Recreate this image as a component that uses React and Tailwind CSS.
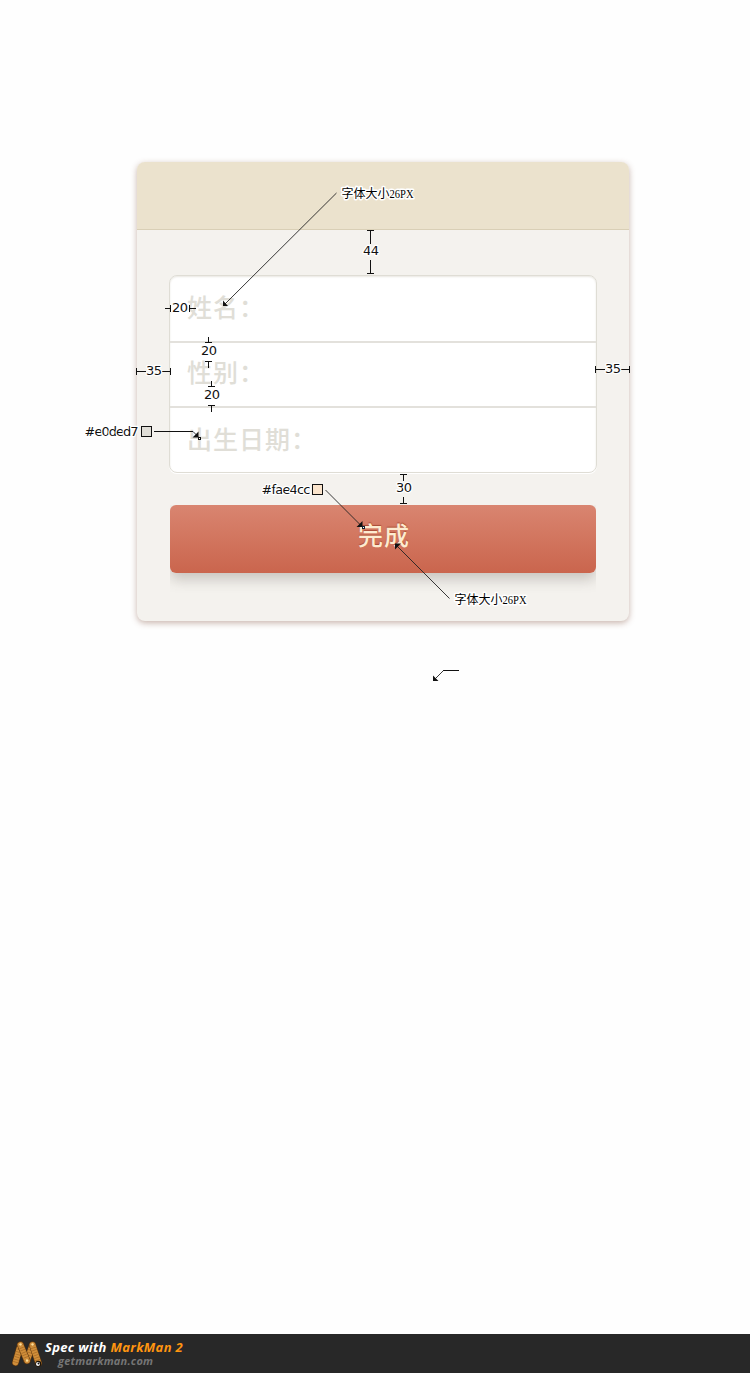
const fields = [
  { name: "姓名：", row: "h-[67px] border-b-2 pb-[5px]" },
  { name: "性别：", row: "h-[65px] border-b-2 pb-[6px]" },
  { name: "出生日期：", row: "h-16 pb-1" },
];

const ink = "#111";

function Label({ x, y, width, children }) {
  return (
    <text
      x={x}
      y={y}
      textLength={width}
      lengthAdjust="spacing"
      fontFamily="'DejaVu Sans', sans-serif"
      fontSize="13"
      fill={ink}
      stroke="#fff"
      strokeWidth="2.5"
      strokeLinejoin="round"
      paintOrder="stroke"
    >
      {children}
    </text>
  );
}

function FontNote({ x, y }) {
  return (
    <text
      x={x}
      y={y}
      fontSize="12"
      fill="#000"
      stroke="#fff"
      strokeWidth="3"
      strokeLinejoin="round"
      paintOrder="stroke"
      fontFamily="'Liberation Serif', 'Noto Sans CJK SC', serif"
    >
      字体大小
      <tspan fontSize="13" textLength="24" lengthAdjust="spacingAndGlyphs">26PX</tspan>
    </text>
  );
}

function Annotations() {
  return (
    <svg
      className="pointer-events-none absolute left-0 top-0"
      width="750"
      height="1373"
      viewBox="0 0 750 1373"
      fill="none"
    >
      <g stroke={ink} strokeWidth="1" shapeRendering="crispEdges">
        <path d="M367 230.5h7M370.5 230v14M370.5 260v13M367 273.5h7" />
        <path d="M165 308.5h5M170.5 305v7M189.5 305v7M189 308.5h7" />
        <path d="M136.5 368v7M136 371.5h10M162 371.5h8M170.5 368v7" />
        <path d="M208.5 337v5M205 342.5h7M205 361.5h7M208.5 361v7" />
        <path d="M211.5 381v5M208 386.5h7M208 405.5h7M211.5 405v7" />
        <path d="M595.5 366v7M595 369.5h10M621 369.5h9M629.5 366v7" />
        <path d="M400 474.5h7M403.5 474v7M403.5 497v6M400 503.5h7" />
        <path d="M154 431.5h39M443 670.5h16" />
      </g>
      <g stroke="#222" strokeWidth="0.9">
        <path d="M336.500 193L225 304M193 431.500l5 5M325.500 490l37 37M449.500 598.500L397 546M443.500 670.500l-8 8" />
      </g>
      <g fill={ink}>
        <path d="M223 300.500l5 5.500h-5zM198.500 431.500v6h-6zM362.500 521v6h-6zM395 549.500v-6h6zM433 675.500l5.500 5.500h-5.500z" />
      </g>
      <rect x="198.500" y="437.500" width="2" height="2" fill="#fff" stroke={ink} />
      <rect x="362.500" y="526.500" width="2" height="2" fill="#fff" stroke="#123" />
      <rect x="141.500" y="426.500" width="10" height="10" fill="#e0ded7" stroke={ink} />
      <rect x="312.500" y="484.500" width="10" height="10" fill="#fae4cc" stroke={ink} />

      <Label x="363" y="255" width="16">44</Label>
      <Label x="172" y="312" width="16">20</Label>
      <Label x="146" y="375" width="16">35</Label>
      <Label x="201" y="355" width="16">20</Label>
      <Label x="204" y="399" width="16">20</Label>
      <Label x="605" y="373" width="16">35</Label>
      <Label x="396" y="492" width="16">30</Label>
      <Label x="84.500" y="436" width="54">#e0ded7</Label>
      <Label x="261.500" y="494" width="49">#fae4cc</Label>
      <FontNote x="341.500" y="197.500" />
      <FontNote x="454.500" y="603.500" />
    </svg>
  );
}

function Stick({ d }) {
  return (
    <>
      <path d={d} stroke="#5f370f" strokeWidth="7" />
      <path d={d} stroke="#d08e3a" strokeWidth="5.800" />
      <path d={d} stroke="#a96d28" strokeWidth="5.200" strokeDasharray="0.8 1.800" strokeLinecap="butt" />
    </>
  );
}

function Logo() {
  return (
    <svg width="34" height="30" viewBox="0 0 34 30" fill="none" strokeLinecap="round">
      <Stick d="M5.500 23.500L10.500 6" />
      <Stick d="M17 21.500L22.500 6" />
      <Stick d="M10.500 6l6.500 15.500" />
      <Stick d="M22.500 6l6 18" />
      <circle cx="10.500" cy="5.500" r="1.200" fill="#ffe09a" />
      <circle cx="22.500" cy="5.500" r="1.200" fill="#ffe09a" />
      <circle cx="17" cy="21.500" r="1.200" fill="#ffe09a" />
      <circle cx="28.300" cy="24.800" r="3" fill="#1a1208" />
      <circle cx="28" cy="25" r="2" fill="#fff" />
      <circle cx="28.500" cy="24.600" r="1" fill="#111" />
    </svg>
  );
}

export default function App() {
  return (
    <div className="relative flex h-[1373px] w-[750px] flex-col overflow-hidden bg-[#fefefe]">
      <main className="flex-1 pl-[137px] pt-[162px]">
        <section className="h-[459px] w-[492px] overflow-hidden rounded-lg bg-[#f4f2ee] shadow-[0_2px_6px_rgba(120,70,50,0.4)]">
          <header className="h-[68px] border-b border-[#d9cfb6] bg-[#ebe2cd]" />
          <form className="px-8 pt-[45px]">
            <div className="h-[198px] w-[428px] overflow-hidden rounded-lg border border-[#dfddd5] bg-white shadow-[0_1px_0_#fff,inset_0_1px_2px_#e9e7e1]">
              {fields.map(({ name, row }) => (
                <div
                  key={name}
                  className={`flex items-center border-[#e3e1dc] pl-[17px] font-['Noto_Sans_CJK_SC',sans-serif] text-[25px] font-medium leading-none tracking-[1px] text-[#e0ded7] ${row}`}
                >
                  {name}
                </div>
              ))}
            </div>
            <div className="ml-px mt-8 h-24 w-[426px] overflow-hidden">
              <button
                type="button"
                className="block h-[68px] w-full rounded-md bg-linear-to-b from-[#d98570] to-[#ca654d] pb-[10px] pl-[2px] font-['Noto_Sans_CJK_SC',sans-serif] text-[25px] font-medium leading-none tracking-[1px] text-[#fdebd0] shadow-[0_6px_14px_rgba(80,70,60,0.28)] [text-shadow:0_-1px_1px_#a94b36]"
              >
                完成
              </button>
            </div>
          </form>
        </section>
      </main>
      <footer className="flex h-[39px] items-start bg-[#282828] pl-[10px] pt-[5px]">
        <Logo />
        <div className="pl-px font-['Open_Sans',sans-serif] font-bold italic">
          <p className="text-[13px] leading-[17px] tracking-[0.33px] text-white">
            Spec with <span className="text-[#ff9510]">MarkMan 2</span>
          </p>
          <p className="pl-[13px] text-[11px] leading-[9px] tracking-[0.24px] text-[#757575]">getmarkman.com</p>
        </div>
      </footer>
      <Annotations />
    </div>
  );
}
